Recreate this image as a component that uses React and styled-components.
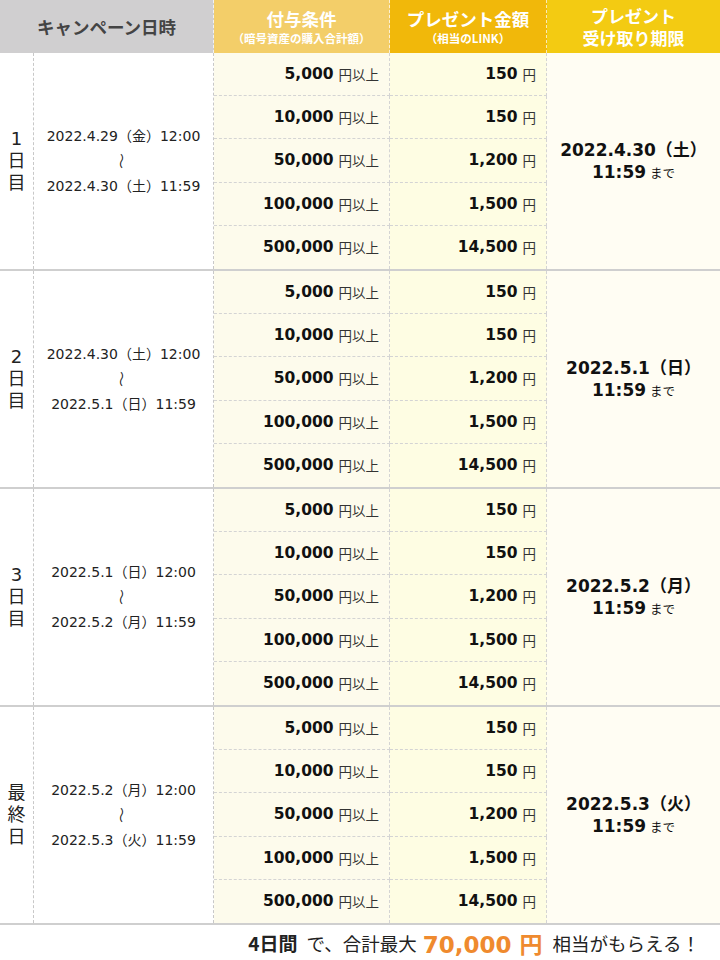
import { createGlobalStyle, styled } from "styled-components";

const GlobalStyle = createGlobalStyle`
  body {
    margin: 0;
    background: #fff;
    font-family: "DejaVu Sans", "Noto Sans CJK JP", sans-serif;
    color: #222;
  }
`;

const COLS = "34px 180px 176px 157px 1fr";

const Table = styled.div`
  width: 720px;
`;

const HeadRow = styled.div`
  display: grid;
  grid-template-columns: 214px 176px 157px 1fr;
  height: 53px;
`;

const HeadCell = styled.div`
  display: flex;
  flex-direction: column;
  align-items: center;
  justify-content: center;
  background: ${(p) => p.$bg};
  color: ${(p) => (p.$dark ? "#444" : "#fff")};
  font-weight: 700;
  font-size: 17.5px;
  line-height: 22px;
  border-right: ${(p) => (p.$last ? "none" : "1px dashed rgba(255,255,255,0.7)")};
  font-family: "Noto Sans CJK JP", "DejaVu Sans", sans-serif;
  small {
    font-size: 11.5px;
    line-height: 15px;
    margin-top: 1px;
  }
`;

const HeadLine = styled.div`
  font-size: 17px;
  line-height: 22px;
  height: 22px;
  overflow: visible;
`;

const Block = styled.div`
  display: grid;
  grid-template-columns: ${COLS};
  grid-template-rows: repeat(5, 1fr);
  height: 218px;
  box-sizing: border-box;
  border-bottom: 2px solid #cfcfcf;
`;

const DayCell = styled.div`
  grid-column: 1;
  grid-row: 1 / -1;
  display: flex;
  align-items: center;
  justify-content: center;
  text-align: center;
  font-size: 18px;
  line-height: 22px;
  color: #222;
  border-right: 1px dashed #c8c8c8;
`;

const DateCell = styled.div`
  grid-column: 2;
  grid-row: 1 / -1;
  display: flex;
  flex-direction: column;
  align-items: center;
  justify-content: center;
  font-size: 14px;
  line-height: 24px;
  color: #222;
  border-right: 1px dashed #c8c8c8;
`;

const Wave = styled.div`
  font-family: "Noto Sans CJK JP", sans-serif;
  font-size: 16px;
  line-height: 26px;
  transform: rotate(90deg) scaleY(0.8);
`;

const ValueCell = styled.div`
  grid-column: ${(p) => p.$col};
  display: flex;
  align-items: center;
  justify-content: flex-end;
  padding-right: 10px;
  background: ${(p) => p.$bg};
  border-right: 1px dashed #d4d4d4;
  border-bottom: ${(p) => (p.$last ? "none" : "1px dashed #d4d4d4")};
  b {
    font-size: 15.5px;
    font-weight: 700;
    color: #111;
  }
  span {
    font-size: 13.5px;
    color: #333;
    margin-left: 5px;
    font-family: "Noto Sans CJK JP", sans-serif;
  }
`;

const DeadlineCell = styled.div`
  grid-column: 5;
  grid-row: 1 / -1;
  display: flex;
  flex-direction: column;
  align-items: center;
  justify-content: center;
  background: #fffdf3;
  font-weight: 700;
  font-size: 17px;
  line-height: 22px;
  color: #111;
  span {
    font-weight: 400;
    font-size: 12.5px;
    margin-left: 4px;
    font-family: "Noto Sans CJK JP", sans-serif;
  }
`;

const Footer = styled.div`
  display: flex;
  justify-content: flex-end;
  align-items: center;
  height: 35px;
  padding-right: 20px;
  font-size: 18.5px;
  color: #222;
  font-family: "Noto Sans CJK JP", "DejaVu Sans", sans-serif;
  b {
    font-weight: 700;
    font-size: 19px;
    margin-right: 9px;
  }
  em {
    font-style: normal;
    font-weight: 700;
    font-size: 23px;
    color: #ef8a2e;
    margin: 0 10px 0 6px;
    font-family: "DejaVu Sans", "Noto Sans CJK JP", sans-serif;
  }
`;

const tiers = [
  ["5,000", "150"],
  ["10,000", "150"],
  ["50,000", "1,200"],
  ["100,000", "1,500"],
  ["500,000", "14,500"],
];

const days = [
  { label: ["1", "日", "目"], from: "2022.4.29（金）12:00", to: "2022.4.30（土）11:59", until: "2022.4.30（土）" },
  { label: ["2", "日", "目"], from: "2022.4.30（土）12:00", to: "2022.5.1（日）11:59", until: "2022.5.1（日）" },
  { label: ["3", "日", "目"], from: "2022.5.1（日）12:00", to: "2022.5.2（月）11:59", until: "2022.5.2（月）" },
  { label: ["最", "終", "日"], from: "2022.5.2（月）12:00", to: "2022.5.3（火）11:59", until: "2022.5.3（火）" },
];

export default function App() {
  return (
    <>
      <GlobalStyle />
      <Table>
        <HeadRow>
          <HeadCell $bg="#d0cfd0" $dark>
            キャンペーン日時
          </HeadCell>
          <HeadCell $bg="#f3ce69">
            付与条件
            <small>（暗号資産の購入合計額）</small>
          </HeadCell>
          <HeadCell $bg="#f1b80a">
            プレゼント金額
            <small>（相当のLINK）</small>
          </HeadCell>
          <HeadCell $bg="#f3cb12" $last>
            <HeadLine>プレゼント</HeadLine>
            <HeadLine>受け取り期限</HeadLine>
          </HeadCell>
        </HeadRow>
        {days.map((d) => (
          <Block key={d.from}>
            <DayCell>
              {d.label[0]}
              <br />
              {d.label[1]}
              <br />
              {d.label[2]}
            </DayCell>
            <DateCell>
              <div>{d.from}</div>
              <Wave>〜</Wave>
              <div>{d.to}</div>
            </DateCell>
            {tiers.map(([cond, amount], i) => [
              <ValueCell key={"c" + i} $col={3} $bg="#fdfbec" $last={i === 4} style={{ gridRow: i + 1 }}>
                <b>{cond}</b>
                <span>円以上</span>
              </ValueCell>,
              <ValueCell key={"a" + i} $col={4} $bg="#fefde3" $last={i === 4} style={{ gridRow: i + 1 }}>
                <b>{amount}</b>
                <span>円</span>
              </ValueCell>,
            ])}
            <DeadlineCell>
              <div>{d.until}</div>
              <div>
                11:59<span>まで</span>
              </div>
            </DeadlineCell>
          </Block>
        ))}
        <Footer>
          <b>4日間</b>で、合計最大<em>70,000 円</em>相当がもらえる！
        </Footer>
      </Table>
    </>
  );
}
